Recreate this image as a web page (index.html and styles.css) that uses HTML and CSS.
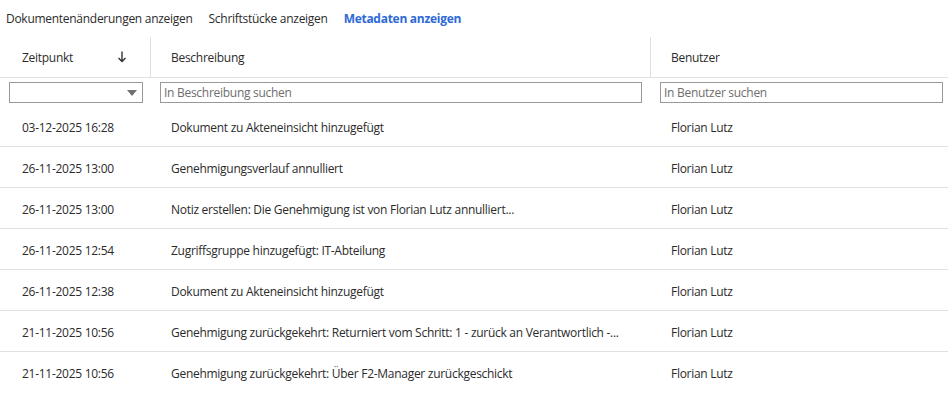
FILE: index.html
```html
<!DOCTYPE html>
<html lang="de">
<head>
    <meta charset="UTF-8">
    <meta name="viewport" content="width=device-width, initial-scale=1.0">
    <title>Verlauf</title>
    <link rel="stylesheet" href="styles.css">
</head>
<body>

    <div class="tabs">
        <a class="tab">Dokumentenänderungen anzeigen</a>
        <a class="tab">Schriftstücke anzeigen</a>
        <a class="tab active">Metadaten anzeigen</a>
    </div>

    <div class="log">
        <div class="row head">
            <div class="cell first">
                <span>Zeitpunkt</span>
                <svg class="sort" width="10" height="12" viewBox="0 0 10 12">
                    <path d="M5 0.5 V10.5 M1.5 7 L5 10.5 L8.5 7" fill="none" stroke="#333" stroke-width="1.4"/>
                </svg>
            </div>
            <div class="cell">Beschreibung</div>
            <div class="cell">Benutzer</div>
        </div>

        <div class="row filters">
            <div class="cell first">
                <div class="select"><span class="caret"></span></div>
            </div>
            <div class="cell mid">
                <input type="text" placeholder="In Beschreibung suchen">
            </div>
            <div class="cell last">
                <input type="text" placeholder="In Benutzer suchen">
            </div>
        </div>

        <div class="row entry">
            <div class="cell">03-12-2025 16:28</div>
            <div class="cell">Dokument zu Akteneinsicht hinzugefügt</div>
            <div class="cell">Florian Lutz</div>
        </div>
        <div class="row entry">
            <div class="cell">26-11-2025 13:00</div>
            <div class="cell">Genehmigungsverlauf annulliert</div>
            <div class="cell">Florian Lutz</div>
        </div>
        <div class="row entry">
            <div class="cell">26-11-2025 13:00</div>
            <div class="cell">Notiz erstellen: Die Genehmigung ist von Florian Lutz annulliert...</div>
            <div class="cell">Florian Lutz</div>
        </div>
        <div class="row entry">
            <div class="cell">26-11-2025 12:54</div>
            <div class="cell">Zugriffsgruppe hinzugefügt: IT-Abteilung</div>
            <div class="cell">Florian Lutz</div>
        </div>
        <div class="row entry">
            <div class="cell">26-11-2025 12:38</div>
            <div class="cell">Dokument zu Akteneinsicht hinzugefügt</div>
            <div class="cell">Florian Lutz</div>
        </div>
        <div class="row entry">
            <div class="cell">21-11-2025 10:56</div>
            <div class="cell">Genehmigung zurückgekehrt: Returniert vom Schritt: 1 - zurück an Verantwortlich -...</div>
            <div class="cell">Florian Lutz</div>
        </div>
        <div class="row entry">
            <div class="cell">21-11-2025 10:56</div>
            <div class="cell">Genehmigung zurückgekehrt: Über F2-Manager zurückgeschickt</div>
            <div class="cell">Florian Lutz</div>
        </div>
    </div>

</body>
</html>
```

FILE: styles.css
```css
body {
    margin: 0;
    background: #fff;
    color: #2b2b2b;
    font-family: "Open Sans", "Noto Sans", sans-serif;
    font-size: 12px;
    letter-spacing: -0.28px;
}

/* Tabs oben */
.tabs {
    display: flex;
    gap: 16px;
    height: 37px;
    padding: 0 6px;
    align-items: center;
    box-sizing: border-box;
    padding-bottom: 1px;
}

.tab {
    color: #2b2b2b;
    cursor: pointer;
}

.tab.active {
    color: #2d6ad6;
    font-weight: bold;
}

.row {
    display: grid;
    grid-template-columns: 150px 500px 1fr;
}

.cell {
    padding-left: 21px;
    display: flex;
    align-items: center;
    white-space: nowrap;
    overflow: hidden;
}

/* Kopfzeile */
.head {
    height: 40px;
    border-bottom: 1px solid #e1e1e1;
}

.head .cell {
    border-left: 1px solid #e1e1e1;
    padding-left: 20px;
    padding-top: 1px;
}

.head .cell.first {
    border-left: none;
    padding-left: 22px;
    justify-content: space-between;
    padding-right: 23px;
}

.sort {
    margin-top: -2px;
}

/* Filterzeile */
.filters {
    height: 28px;
    align-items: center;
}

.filters .cell {
    padding: 0;
}

.filters .first {
    padding: 0 7px 0 9px;
}

.filters .mid {
    padding: 0 8px 0 10px;
}

.filters .last {
    padding: 0 5px 0 10px;
}

.select,
.filters input {
    width: 100%;
    height: 21px;
    box-sizing: border-box;
    border: 1px solid #999;
    background: #fff;
}

.select {
    position: relative;
}

.caret {
    position: absolute;
    right: 5px;
    top: 7px;
    width: 0;
    height: 0;
    border-left: 5px solid transparent;
    border-right: 5px solid transparent;
    border-top: 6px solid #707070;
}

.filters input {
    font-family: inherit;
    font-size: 12px;
    letter-spacing: -0.28px;
    padding: 0 3px;
    color: #2b2b2b;
    outline: none;
}

.filters input::placeholder {
    color: #6e6e6e;
}

/* Einträge */
.entry {
    height: 40px;
    border-bottom: 1px solid #e1e1e1;
}

.entry .cell {
    padding-top: 2px;
}

.entry .cell:first-child {
    padding-left: 22px;
}

.entry:last-child {
    border-bottom: none;
}
```
